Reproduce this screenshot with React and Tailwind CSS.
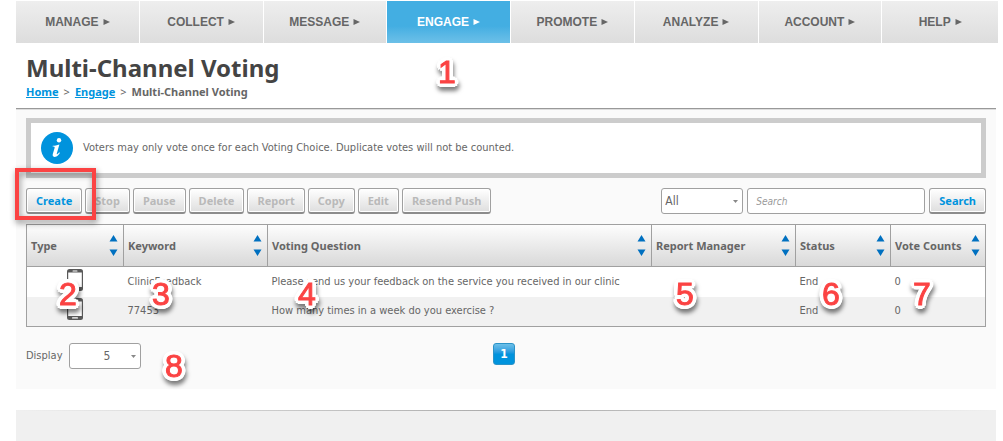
import React from "react";

const navItems = [
  { label: "MANAGE" },
  { label: "COLLECT" },
  { label: "MESSAGE" },
  { label: "ENGAGE", active: true },
  { label: "PROMOTE" },
  { label: "ANALYZE" },
  { label: "ACCOUNT" },
  { label: "HELP", last: true },
];

const columns = [
  { label: "Type", width: "w-[97px]" },
  { label: "Keyword", width: "w-[144px]" },
  { label: "Voting Question", width: "w-auto" },
  { label: "Report Manager", width: "w-[144px]" },
  { label: "Status", width: "w-[95px]" },
  { label: "Vote Counts", width: "w-[95px]" },
];

const rows = [
  {
    keyword: "ClinicFeedback",
    question: "Please send us your feedback on the service you received in our clinic",
    status: "End",
    votes: 0,
  },
  {
    keyword: "77453",
    question: "How many times in a week do you exercise ?",
    status: "End",
    votes: 0,
  },
];

const actions = ["Stop", "Pause", "Delete", "Report", "Copy", "Edit", "Resend Push"];

const markers = [
  { n: 1, pos: "left-[438px] top-[56px]" },
  { n: 2, pos: "left-[59px] top-[278px]" },
  { n: 3, pos: "left-[152px] top-[278px]" },
  { n: 4, pos: "left-[298px] top-[278px]" },
  { n: 5, pos: "left-[676px] top-[278px]" },
  { n: 6, pos: "left-[822px] top-[278px]" },
  { n: 7, pos: "left-[913px] top-[278px]" },
  { n: 8, pos: "left-[165px] top-[350px]" },
];

function NavItem({ label, active, last }) {
  return (
    <a
      href="#"
      className={`flex h-[42px] basis-0 items-center justify-center gap-1 font-['Liberation_Sans',sans-serif] text-xs font-bold ${
        last ? "grow-[116]" : "grow-[123]"
      } ${
        active
          ? "bg-linear-to-b from-[#43aee2] from-60% to-[#6cc0e8] text-white"
          : "bg-linear-to-b from-[#eeeeee] to-[#dddddd] text-[#666666]"
      }`}
    >
      {label}
      <svg width="7" height="6" viewBox="0 0 7 6" fill="currentColor" aria-hidden="true">
        <path d="M0.5 0 L7 3 L0.5 6 Z" />
      </svg>
    </a>
  );
}

function Button({ children, disabled }) {
  return (
    <button
      type="button"
      disabled={disabled}
      className={`h-[26px] rounded-[3px] border border-b-2 border-[#a0a0a0] border-b-[#8c8c8c] bg-linear-to-b from-white to-[#dedede] px-[9px] font-['Noto_Sans',sans-serif] text-[11px] leading-4 font-bold whitespace-nowrap shadow-[inset_0_0_0_1px_#ffffff] ${
        disabled ? "text-[#b9b9b9]" : "text-[#0093dd]"
      }`}
    >
      {children}
    </button>
  );
}

function Select({ label, id, children, className, arrow }) {
  return (
    <div className={`relative ${className}`}>
      <select
        id={id}
        aria-label={label}
        className={`h-[26px] w-full appearance-none rounded-[3px] border border-[#a0a0a0] bg-white text-xs text-[#666666] ${arrow}`}
      >
        {children}
      </select>
      <svg
        className="pointer-events-none absolute top-3 right-[5px]"
        width="5"
        height="3"
        viewBox="0 0 5 3"
        fill="#888888"
        aria-hidden="true"
      >
        <path d="M0 0 H5 L2.5 3 Z" />
      </svg>
    </div>
  );
}

function PhoneIcon() {
  return (
    <svg className="block" width="16" height="22" viewBox="0 0 16 22" aria-label="Mobile" role="img">
      <rect width="16" height="22" rx="2.5" fill="#595959" />
      <rect x="1.2" y="3.5" width="13.6" height="14.5" fill="#ffffff" />
      <rect x="5.5" y="1.5" width="5" height="1" rx="0.5" fill="#ffffff" />
      <rect x="5" y="19.3" width="6" height="1.2" rx="0.6" fill="#ffffff" />
    </svg>
  );
}

function InfoIcon() {
  return (
    <svg width="32" height="32" viewBox="0 0 32 32" className="shrink-0" aria-hidden="true">
      <circle cx="16" cy="16" r="16" fill="#0093dd" />
      <circle cx="18" cy="8.3" r="2.2" fill="#ffffff" />
      <path
        d="M11.8 13.8 C13.8 13.6 15.8 13.1 18.4 12.4 L15.8 21.6 C15.5 22.7 16.2 22.8 18.2 20.3 L18.9 20.9 C16.8 24 15 24.9 13.4 24.9 C11.9 24.9 11.4 23.6 11.8 22.1 L13.6 15.9 C13.9 14.9 13.3 14.7 11.6 14.6 Z"
        fill="#ffffff"
      />
    </svg>
  );
}

export default function App() {
  return (
    <div className="relative flex min-h-screen flex-col bg-white pt-px pl-4 font-['DejaVu_Sans_Condensed','DejaVu_Sans',sans-serif] text-[11px] leading-4 text-[#666666]">
      <nav className="mr-[5px] flex gap-px">
        {navItems.map((item) => (
          <NavItem key={item.label} {...item} />
        ))}
      </nav>

      <header className="mr-[7px] h-[65px] px-[10px] pt-[9px] font-['Noto_Sans',sans-serif]">
        <h1 className="text-2xl leading-8 font-bold text-[#444444]">Multi-Channel Voting</h1>
        <div className="flex gap-[5px] font-bold">
          <a href="#" className="text-[#0093dd] underline">Home</a>
          <span className="font-normal">&gt;</span>
          <a href="#" className="text-[#0093dd] underline">Engage</a>
          <span className="font-normal">&gt;</span>
          <span>Multi-Channel Voting</span>
        </div>
      </header>

      <main className="mr-[7px] border-t border-[#999999] bg-[#fafafa] px-[10px] pt-[9px] pb-5 shadow-[inset_0_1px_0_#dddddd]">
        <div className="flex h-[60px] items-center gap-[10px] border-5 border-[#cccccc] bg-white px-[10px]">
          <InfoIcon />
          <p>Voters may only vote once for each Voting Choice. Duplicate votes will not be counted.</p>
        </div>

        <div className="flex items-center justify-between pt-[10px]">
          <div className="flex gap-[3px]">
            <Button>Create</Button>
            {actions.map((a) => (
              <Button key={a} disabled>{a}</Button>
            ))}
          </div>
          <form className="flex gap-1" onSubmit={(e) => e.preventDefault()}>
            <Select label="Filter" id="filter" className="w-[82px]" arrow="pl-[3px]">
              <option>All</option>
            </Select>
            <input
              type="text"
              aria-label="Search"
              placeholder="Search"
              className="h-[26px] w-[178px] rounded-[3px] border border-[#a0a0a0] bg-white px-2 text-[10px] placeholder:text-[#999999] placeholder:italic"
            />
            <Button>Search</Button>
          </form>
        </div>

        <table className="mt-[10px] w-full table-fixed border-collapse border border-[#a0a0a0]">
          <thead className="font-['Noto_Sans',sans-serif]">
            <tr className="h-[42px] bg-linear-to-b from-[#fdfdfd] to-[#d8d8d8]">
              {columns.map((c) => (
                <th key={c.label} className={`border border-[#a0a0a0] p-0 pr-[5px] pl-1 text-left ${c.width}`}>
                  <div className="flex items-center justify-between whitespace-nowrap">
                    {c.label}
                    <button type="button" aria-label={`Sort by ${c.label}`}>
                      <svg className="block" width="9" height="21" viewBox="0 0 9 21" fill="#0070c0" aria-hidden="true">
                        <path d="M4.5 0 L8.5 6.5 H0.5 Z M0.5 14.5 H8.5 L4.5 21 Z" />
                      </svg>
                    </button>
                  </div>
                </th>
              ))}
            </tr>
          </thead>
          <tbody>
            {rows.map((r) => (
              <tr key={r.keyword} className="h-[30px] bg-white even:bg-[#f1f1f1]">
                <td className="p-0 pb-1">
                  <div className="flex justify-center">
                    <PhoneIcon />
                  </div>
                </td>
                <td className="p-0 pl-1">{r.keyword}</td>
                <td className="p-0 pl-1">{r.question}</td>
                <td className="p-0 pl-1" />
                <td className="p-0 pl-1">{r.status}</td>
                <td className="p-0 pl-1">{r.votes}</td>
              </tr>
            ))}
          </tbody>
        </table>

        <div className="grid grid-cols-[1fr_auto_1fr] items-start pt-4 pr-1">
          <div className="flex items-center gap-2">
            <label htmlFor="display" className="w-[35px]">Display</label>
            <Select id="display" className="w-[72px]" arrow="pl-1 text-center">
              <option>5</option>
            </Select>
          </div>
          <button
            type="button"
            className="h-[22px] w-[22px] rounded-[3px] border border-[#2b93c8] bg-linear-to-b from-[#6cc0e8] to-[#0093dd] to-50% text-xs font-bold text-white"
          >
            1
          </button>
        </div>
      </main>

      <footer className="mt-[21px] mr-[7px] grow bg-[#f0f0f0]">
        <div className="h-px bg-linear-to-r from-[#f0f0f0] via-[#aaaaaa] to-[#f0f0f0]" />
      </footer>

      <div className="pointer-events-none absolute top-[168px] left-[15px] h-[52px] w-[81px] border-4 border-[#fb4343] drop-shadow-[1px_3px_3px_rgba(0,0,0,0.45)]" />
      {markers.map((m) => (
        <span
          key={m.n}
          className={`pointer-events-none absolute font-['Liberation_Sans',sans-serif] text-[32px] leading-8 text-[#fb4343] drop-shadow-[1px_4px_2px_rgba(0,0,0,0.5)] [-webkit-text-stroke:1px_#fb4343] [text-shadow:4px_0_white,-4px_0_white,0_4px_white,0_-4px_white,3px_3px_white,-3px_3px_white,3px_-3px_white,-3px_-3px_white,4px_1px_white,-4px_1px_white,4px_-1px_white,-4px_-1px_white,1px_4px_white,-1px_4px_white,1px_-4px_white,-1px_-4px_white,2px_2px_white,-2px_2px_white,2px_-2px_white,-2px_-2px_white] ${m.pos}`}
        >
          {m.n}
        </span>
      ))}
    </div>
  );
}
